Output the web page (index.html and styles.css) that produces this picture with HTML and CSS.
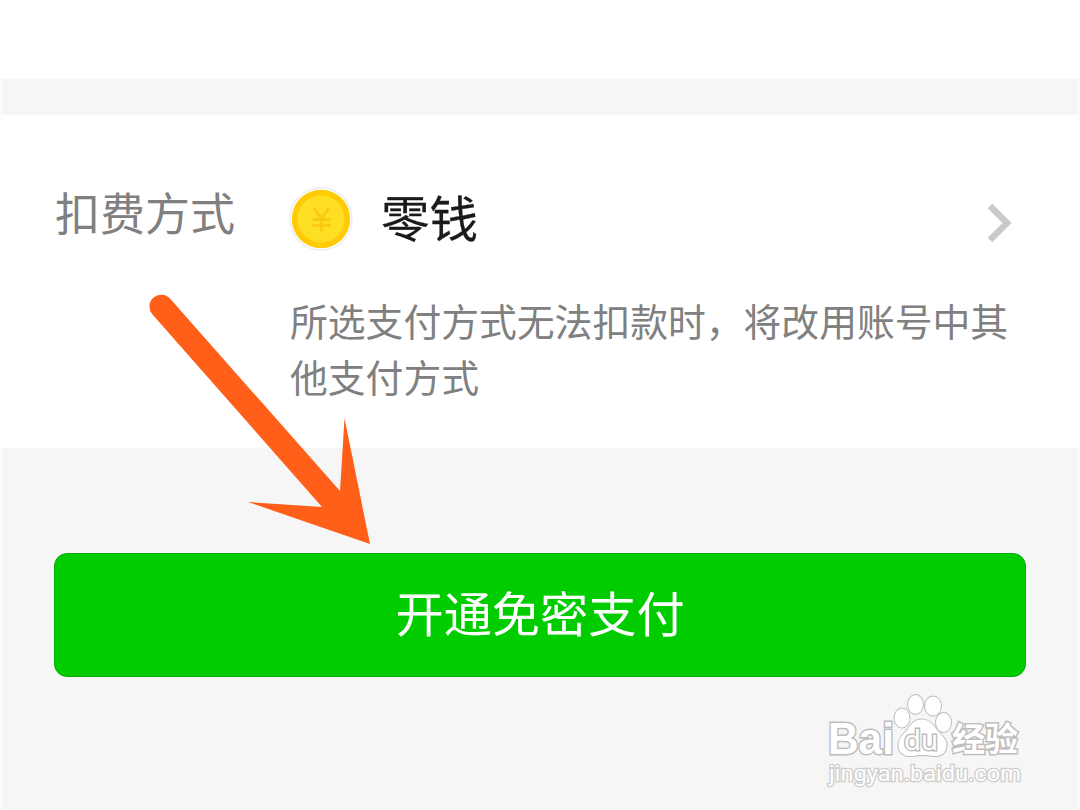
FILE: index.html
```html
<!DOCTYPE html>
<html lang="zh-CN">
<head>
    <meta charset="UTF-8">
    <meta name="viewport" content="width=device-width, initial-scale=1.0">
    <title>开通免密支付</title>
    <link rel="stylesheet" href="styles.css">
</head>
<body>
    <div class="page">
        <div class="top"></div>
        <div class="payment">
            <div class="label">扣费方式</div>
            <div class="method">
                <div class="method-row">
                    <svg class="coin" width="64" height="64" viewBox="0 0 64 64">
                        <circle cx="32" cy="32" r="31" fill="#fff" stroke="#eceef0" stroke-width="1.5"/>
                        <circle cx="32" cy="32" r="29.2" fill="#ffcb04"/>
                        <circle cx="32" cy="32" r="23.5" fill="#ffdf24"/>
                        <path d="M25 21L32.500 31.500L40 21M32.500 31V44.500M23.500 32.500H42M23.500 38.500H42" fill="none" stroke="#fbcb10" stroke-width="3.200"/>
                    </svg>
                    <span class="name">零钱</span>
                    <svg class="chevron" width="28" height="42" viewBox="0 0 28 42">
                        <path d="M4 4L21 21L4 38" fill="none" stroke="#c8c8cd" stroke-width="6.500"/>
                    </svg>
                </div>
                <p class="tip">所选支付方式无法扣款时，将改用账号中其他支付方式</p>
            </div>
        </div>
        <div class="button-container">
            <button class="open">开通免密支付</button>
        </div>
    </div>

    <svg class="arrow" width="224" height="254" viewBox="148 292 224 254">
        <path d="M170 298.500L340 491L344.500 418L370 544L248 502L322 507L152.500 314.500A11.800 11.800 0 0 1 170 298.500Z" fill="#ff5f19"/>
    </svg>

    <svg class="watermark" width="210" height="100" viewBox="820 690 210 100">
        <g class="outline">
            <text class="bai" x="828" y="754" textLength="66" lengthAdjust="spacingAndGlyphs">Bai</text>
            <ellipse cx="902" cy="718" rx="7.500" ry="9.500"/>
            <ellipse cx="915.500" cy="704.500" rx="7.500" ry="9.500"/>
            <ellipse cx="933" cy="706" rx="8" ry="9.500"/>
            <ellipse cx="943.500" cy="722.500" rx="7.500" ry="9.500"/>
            <path d="M922 719.500C929 719.500 933 724 937 730C941 735 946 738 946.500 744C947 751 943 756 936 756C930 756 928 755 922 755C916 755 914 756.500 908 756C901 755 898 750 898.500 744C899 737 904 734 908 729C912 723 915 719.500 922 719.500Z"/>
            <text class="du" x="904" y="750" textLength="34" lengthAdjust="spacingAndGlyphs">du</text>
            <text class="jingyan" x="952" y="751" textLength="66" lengthAdjust="spacingAndGlyphs">经验</text>
        </g>
        <text class="url" x="829" y="781" textLength="192" lengthAdjust="spacingAndGlyphs">jingyan.baidu.com</text>
    </svg>
</body>
</html>
```

FILE: styles.css
```css
* {
    box-sizing: border-box;
}
body {
    margin: 0;
    height: 810px;
    overflow: hidden;
    position: relative;
    background-color: #fdfdfd;
    font-family: "Noto Sans CJK SC", sans-serif;
}
.page {
    height: 810px;
    margin: 0 2px;
    background-color: #f6f6f6;
}
.top {
    height: 79px;
    background-color: #fff;
    margin-bottom: 36px;
}
.payment {
    display: flex;
    height: 333px;
    padding: 69px 52px 0;
    background-color: #fff;
}
.label {
    width: 236px;
    padding-left: 1px;
    font-size: 45px;
    line-height: 56px;
    color: #808080;
}
.method {
    flex: 1;
}
.method-row {
    display: flex;
    align-items: center;
    height: 64px;
}
.coin {
    margin-top: 6px;
    margin-left: -1px;
}
.name {
    margin-left: 28px;
    font-size: 48.5px;
    line-height: 64px;
    color: #1a1a1a;
    -webkit-text-stroke: 0.3px #1a1a1a;
}
.chevron {
    margin-left: auto;
    margin-right: 12px;
    margin-top: 14px;
}
.tip {
    width: 730px;
    margin: 44px 0 0;
    font-size: 37.8px;
    line-height: 56px;
    color: #808080;
}
.button-container {
    padding: 105px 52px 0;
}
.open {
    display: block;
    width: 100%;
    height: 124px;
    padding: 0 0 8px;
    border: 1px solid #08a808;
    border-radius: 13px;
    background-color: #00cc00;
    color: #fff;
    font-family: inherit;
    font-size: 48.2px;
    line-height: 114px;
}
.arrow {
    position: absolute;
    left: 148px;
    top: 292px;
}
.watermark {
    position: absolute;
    left: 820px;
    top: 690px;
}
.outline {
    fill: #fff;
    stroke: #bdbdbd;
    stroke-width: 2px;
    paint-order: stroke;
}
.bai {
    font: bold 44px "Liberation Sans", sans-serif;
    stroke-width: 3px;
}
.du {
    font: 27px "Noto Sans", sans-serif;
    stroke-width: 3px;
}
.jingyan {
    font: bold 33px "Noto Sans CJK SC", sans-serif;
    stroke-width: 3px;
}
.url {
    font: 22px Roboto, sans-serif;
    fill: #fff;
    stroke: #cdcdcd;
    stroke-width: 2.5px;
    paint-order: stroke;
}
```
